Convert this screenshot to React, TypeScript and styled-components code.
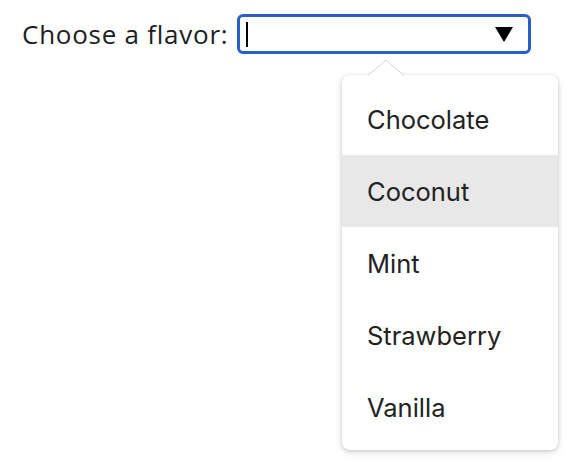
import styled, { createGlobalStyle } from 'styled-components';

const GlobalStyle = createGlobalStyle`
  html, body {
    margin: 0;
    padding: 0;
    background: #ffffff;
  }
`;

const Page = styled.div`
  box-sizing: border-box;
  min-height: 461px;
  padding: 14px 0 0 22px;
  display: flex;
  flex-direction: column;
  font-family: 'Open Sans', 'Noto Sans', sans-serif;
`;

const Row = styled.div`
  display: flex;
  align-items: center;
  gap: 9px;
`;

const Label = styled.label`
  font-size: 26px;
  color: #1d1d1f;
  letter-spacing: 0.75px;
`;

const Field = styled.div`
  box-sizing: border-box;
  width: 294px;
  height: 40px;
  border: 3px solid #2a5fc9;
  border-radius: 6px;
  display: flex;
  align-items: center;
  justify-content: space-between;
  padding: 0 15px 0 6px;
`;

const Caret = styled.span`
  width: 2px;
  height: 25px;
  background: #000;
`;

const Arrow = styled.span`
  width: 0;
  height: 0;
  border-left: 9px solid transparent;
  border-right: 9px solid transparent;
  border-top: 15px solid #000;
`;

const Popover = styled.div`
  position: relative;
  margin: 21px 0 0 320px;
  width: 216px;
  padding: 8px 0 7px;
  background: #fff;
  border-radius: 8px;
  box-shadow: 0 1px 4px rgba(0, 0, 0, 0.18), 0 3px 10px rgba(0, 0, 0, 0.08);
`;

const Tip = styled.svg`
  position: absolute;
  left: 25px;
  top: -16px;
`;

const List = styled.ul`
  list-style: none;
  margin: 0;
  padding: 0;
`;

const Item = styled.li<{ $active?: boolean }>`
  height: 72px;
  display: flex;
  align-items: center;
  padding: 1px 0 0 25px;
  box-sizing: border-box;
  font-family: Inter, Roboto, sans-serif;
  font-size: 25.5px;
  color: #222;
  background: ${(p) => (p.$active ? '#e8e8e8' : 'transparent')};
`;

const flavors = ['Chocolate', 'Coconut', 'Mint', 'Strawberry', 'Vanilla'];

export default function App() {
  return (
    <>
      <GlobalStyle />
      <Page>
        <Row>
          <Label>Choose a flavor:</Label>
          <Field>
            <Caret />
            <Arrow />
          </Field>
        </Row>
        <Popover>
          <Tip width="38" height="17" viewBox="0 0 38 17">
            <path d="M0 17 L19 1 L38 17 Z" fill="#fff" />
            <path d="M1 16.5 L19 1 L37 16.5" fill="none" stroke="#d4d4d4" strokeWidth="1" />
          </Tip>
          <List>
            {flavors.map((f) => (
              <Item key={f} $active={f === 'Coconut'}>
                {f}
              </Item>
            ))}
          </List>
        </Popover>
      </Page>
    </>
  );
}
